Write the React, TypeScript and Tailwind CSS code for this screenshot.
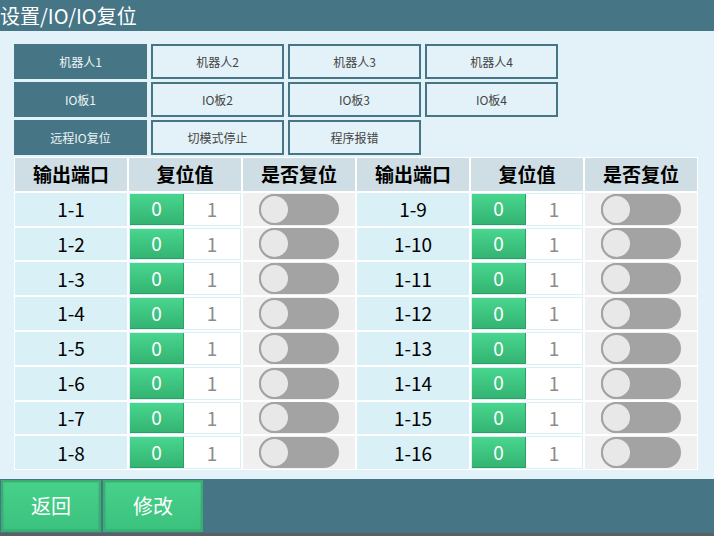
import React from "react";

const tabs = [
  [
    { label: "机器人1", active: true },
    { label: "机器人2" },
    { label: "机器人3" },
    { label: "机器人4" },
  ],
  [
    { label: "IO板1", active: true },
    { label: "IO板2" },
    { label: "IO板3" },
    { label: "IO板4" },
  ],
  [
    { label: "远程IO复位", active: true },
    { label: "切模式停止" },
    { label: "程序报错" },
  ],
];

const headers = ["输出端口", "复位值", "是否复位", "输出端口", "复位值", "是否复位"];

const Toggle: React.FC = () => (
  <div className="relative h-[31px] w-[80px] rounded-full bg-[#a3a3a3]">
    <div className="absolute left-0 top-0 h-[31px] w-[31px] rounded-full border-2 border-[#a3a3a3] bg-[#e8e8e8]" />
  </div>
);

const ValueCell: React.FC = () => (
  <div className="flex h-full border border-[#d9eff6] bg-white">
    <div className="flex w-[54px] items-center justify-center border-r border-b border-[#2f9f62] bg-gradient-to-b from-[#48d68f] to-[#34b472] text-[19px] text-white">
      0
    </div>
    <div className="flex flex-1 items-center justify-center text-[19px] text-[#8c8c8c]">1</div>
  </div>
);

const PortCells: React.FC<{ port: string }> = ({ port }) => (
  <>
    <div className="flex items-center justify-center bg-[#daf0f7] text-[19px] text-black">{port}</div>
    <ValueCell />
    <div className="flex items-center justify-center bg-[#f0f0f0]">
      <Toggle />
    </div>
  </>
);

export default function App() {
  const rows = Array.from({ length: 8 }, (_, i) => i);
  return (
    <div
      className="flex h-[536px] w-[714px] flex-col overflow-hidden bg-[#e3f2f8]"
      style={{ fontFamily: '"Noto Sans CJK SC", "Noto Sans", sans-serif' }}
    >
      {/* title */}
      <div className="flex h-[31px] items-center bg-[#467585] text-[20px] leading-none text-white">
        设置/IO/IO复位
      </div>

      {/* content */}
      <div className="flex-1 px-[14px] pt-[13px]">
        <div className="flex flex-col gap-[3px]">
          {tabs.map((row, r) => (
            <div key={r} className="flex gap-[4px]">
              {row.map((t) => (
                <div
                  key={t.label}
                  className={
                    t.active
                      ? "flex h-[35px] w-[133px] items-center justify-center bg-[#467585] text-[12px] text-[#eef5f7]"
                      : "flex h-[35px] w-[133px] items-center justify-center border-2 border-[#467585] text-[12px] text-[#444]"
                  }
                >
                  {t.label}
                </div>
              ))}
            </div>
          ))}
        </div>

        <div className="mt-[2px] w-[684px] bg-white p-px">
          <div className="grid grid-cols-6 auto-rows-[32.8px] gap-[2px]">
            {headers.map((h, i) => (
              <div
                key={i}
                className="flex items-center justify-center bg-[#cfdee4] text-[19px] font-bold text-black"
              >
                {h}
              </div>
            ))}
            {rows.map((i) => (
              <React.Fragment key={i}>
                <PortCells port={`1-${i + 1}`} />
                <PortCells port={`1-${i + 9}`} />
              </React.Fragment>
            ))}
          </div>
        </div>
      </div>

      {/* bottom bar */}
      <div className="flex h-[57px] gap-[2px] border-b-[3px] border-[#5a6064] bg-[#467585] px-px pt-px">
        {["返回", "修改"].map((b) => (
          <div
            key={b}
            className="flex h-[52px] w-[100px] items-center justify-center border-2 border-[#3aae72] bg-gradient-to-b from-[#47d18b] to-[#3cc27e] text-[20px] text-white shadow-[inset_0_0_2px_rgba(0,0,0,0.2)]"
          >
            {b}
          </div>
        ))}
      </div>
    </div>
  );
}
